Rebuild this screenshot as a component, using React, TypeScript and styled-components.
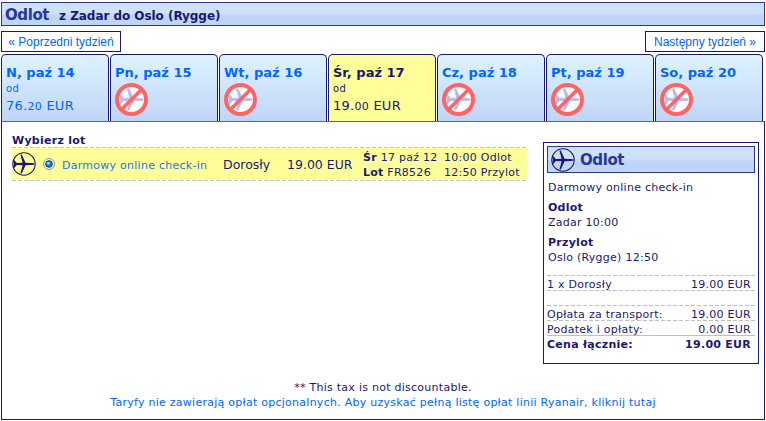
import styled, { createGlobalStyle } from 'styled-components';

const colors = {
    navy: '#191970',
    title: '#2b3796',
    link: '#0066ff',
    selected: '#ffff99',
    dash: '#c0c0c0',
}

const GlobalStyle = createGlobalStyle`
    *{
        box-sizing: border-box;
    }
    body{
        margin: 0;
        background: white;
        color: ${colors.navy};
        font-family: Verdana, "DejaVu Sans", sans-serif;
        font-size: 11px;
        line-height: 15px;
        letter-spacing: 0.26px;
        white-space: nowrap;
    }
    p, h1, h2, h3{
        margin: 0;
        font-size: inherit;
    }
`
const Page = styled.main`
    width: 766px;
    height: 421px;
    padding: 2px 1px 1px;
    overflow: hidden;
`
const TitleBar = styled.header`
    height: 24px;
    padding-left: 3px;
    display: flex;
    align-items: baseline;
    gap: 10px;
    line-height: 24px;
    border: 1px solid ${colors.title};
    background: linear-gradient(#cfe0f9 0 45%, #bfd5f6 60%);
`
const Title = styled.h1`
    color: ${colors.title};
    font-size: 15px;
    letter-spacing: -0.4px;
`
const Route = styled.h2`
    font-size: 12px;
    letter-spacing: -0.05px;
`
const WeekNav = styled.nav`
    margin-top: 5px;
    display: flex;
    justify-content: space-between;
`
const WeekLink = styled.a`
    width: 120px;
    height: 21px;
    border: 1px solid ${colors.navy};
    color: ${colors.link};
    font: 12px/20px "Liberation Sans", Arial, sans-serif;
    letter-spacing: 0;
    text-align: center;
`
const Tabs = styled.div`
    margin-top: 2px;
    display: flex;
    gap: 1px;
`
const Tab = styled.div<{ $selected?: boolean }>`
    width: 108px;
    height: 67px;
    padding: 10px 0 0 4px;
    border: 1px solid ${colors.navy};
    border-bottom: 0;
    border-radius: 5px 5px 0 0;
    color: ${({ $selected }) => $selected ? colors.navy : colors.link};
    background: ${({ $selected }) => $selected ? colors.selected : 'linear-gradient(#def3ff, #bfd5f6)'};
    svg{
        display: block;
        margin-top: 2px;
    }
`
const Day = styled.h3`
    font-size: 13px;
    line-height: 16px;
    letter-spacing: 0;
`
const From = styled.p`
    font-size: 10px;
    line-height: 15px;
`
const Price = styled.p`
    font-size: 13px;
    line-height: 20px;
    small{
        font-size: 11px;
    }
`
const Panel = styled.section`
    height: 299px;
    border: 1px solid ${colors.navy};
    border-top-color: #646478;
    display: flex;
    flex-direction: column;
    justify-content: space-between;
`
const PanelBody = styled.div`
    padding: 10px 5px 0 10px;
    display: flex;
    justify-content: space-between;
    align-items: flex-start;
`
const FlightList = styled.div`
    width: 515px;
`
const ListTitle = styled.h3`
    height: 15px;
    line-height: 17px;
`
const Dashes = styled.hr`
    height: 1px;
    margin: 0;
    border: 0;
    background: repeating-linear-gradient(90deg, ${colors.dash} 0 4px, transparent 4px 6px);
`
const FlightRow = styled.div`
    height: 32px;
    display: grid;
    grid-template-columns: 31px 19px 161px 64px 76px 81px auto;
    align-items: center;
    background: ${colors.selected};
    svg{
        display: block;
    }
`
const Fare = styled.a`
    color: #2472e8;
    padding-top: 2px;
`
const Large = styled.p`
    font-size: 12.5px;
    padding-top: 1px;
    letter-spacing: 0;
`
const Times = styled.div`
    padding-top: 2px;
`
const Sidebar = styled.aside`
    width: 216px;
    height: 222px;
    margin-top: 10px;
    padding: 3px;
    border: 1px solid ${colors.navy};
`
const SidebarTitle = styled(TitleBar)`
    height: 27px;
    align-items: center;
    gap: 5px;
`
const Details = styled.div`
    padding: 7px 0 10px 1px;
    p + h3{
        margin-top: 5px;
    }
`
const SummaryRow = styled.div<{ $total?: boolean }>`
    height: 14px;
    padding-right: 4px;
    display: flex;
    justify-content: space-between;
    line-height: 17px;
    font-weight: ${({ $total }) => $total ? 'bold' : 'normal'};
`
const TotalRule = styled(Dashes)`
    background: ${colors.dash};
`
const Footer = styled.footer`
    padding-bottom: 9px;
    text-align: center;
    a{
        color: ${colors.link};
    }
`

const planePath = 'M1 8 2.2 8 4.8 11 10.6 10.8 8.4 2.5 9.8 2.5 13.6 10.8 19.5 11Q22.3 11.2 23 12 22.3 12.8 19.5 13L13.6 13.2 9.8 21.5 8.4 21.5 10.6 13.2 4.8 13 2.2 16 1 16 2 12Z'

const PlaneIcon = () => (
    <svg width="24" height="24" viewBox="0 0 24 24">
        <circle cx="12" cy="12" r="11.2" fill="none" stroke={colors.navy} strokeWidth="1.1" />
        <path d={planePath} fill={colors.navy} />
    </svg>
)

const NoFlightIcon = () => (
    <svg width="33" height="33" viewBox="0 0 33 33">
        <circle cx="16.5" cy="16.5" r="14.5" fill="white" />
        <path d={planePath} fill="#b8b8ef" stroke="#b8b8ef" strokeWidth="0.8" transform="translate(3.3 3.3) scale(1.1)" />
        <circle cx="16.5" cy="16.5" r="14.5" fill="none" stroke="#ff6464" strokeWidth="4" />
        <path d="M6.5 26.5 26.5 6.5" stroke="#ff6464" strokeWidth="3.6" />
    </svg>
)

const RadioIcon = () => (
    <svg width="12" height="12" viewBox="0 0 12 12">
        <circle cx="6" cy="6" r="5.5" fill="#f4f4f4" stroke="#8e8f8f" />
        <circle cx="6" cy="6" r="3.3" fill="#1c7fb0" stroke="#173e5c" />
        <circle cx="5.3" cy="5.2" r="1.5" fill="#8fdcf5" />
    </svg>
)

const days = [
    { day: 'N, paź 14', euros: '76.', cents: '20' },
    { day: 'Pn, paź 15' },
    { day: 'Wt, paź 16' },
    { day: 'Śr, paź 17', euros: '19.', cents: '00', selected: true },
    { day: 'Cz, paź 18' },
    { day: 'Pt, paź 19' },
    { day: 'So, paź 20' },
]

const App = () => {
    return (
        <Page>
            <GlobalStyle />
            <TitleBar>
                <Title>Odlot</Title>
                <Route>z Zadar do Oslo (Rygge)</Route>
            </TitleBar>
            <WeekNav>
                <WeekLink>« Poprzedni tydzień</WeekLink>
                <WeekLink>Następny tydzień »</WeekLink>
            </WeekNav>
            <Tabs>
                {days.map(({ day, euros, cents, selected }) => (
                    <Tab key={day} $selected={selected}>
                        <Day>{day}</Day>
                        {euros ? (
                            <>
                                <From>od</From>
                                <Price>{euros}<small>{cents}</small> EUR</Price>
                            </>
                        ) : <NoFlightIcon />}
                    </Tab>
                ))}
            </Tabs>
            <Panel>
                <PanelBody>
                    <FlightList>
                        <ListTitle>Wybierz lot</ListTitle>
                        <Dashes />
                        <FlightRow>
                            <PlaneIcon />
                            <RadioIcon />
                            <Fare>Darmowy online check-in</Fare>
                            <Large>Dorosły</Large>
                            <Large>19.00 EUR</Large>
                            <Times>
                                <p><b>Śr</b> 17 paź 12</p>
                                <p><b>Lot</b> FR8526</p>
                            </Times>
                            <Times>
                                <p>10:00 Odlot</p>
                                <p>12:50 Przylot</p>
                            </Times>
                        </FlightRow>
                        <Dashes />
                    </FlightList>
                    <Sidebar>
                        <SidebarTitle>
                            <PlaneIcon />
                            <Title>Odlot</Title>
                        </SidebarTitle>
                        <Details>
                            <p>Darmowy online check-in</p>
                            <h3>Odlot</h3>
                            <p>Zadar 10:00</p>
                            <h3>Przylot</h3>
                            <p>Oslo (Rygge) 12:50</p>
                        </Details>
                        <Dashes />
                        <SummaryRow><span>1 x Dorosły</span><span>19.00 EUR</span></SummaryRow>
                        <Dashes />
                        <SummaryRow />
                        <Dashes />
                        <SummaryRow><span>Opłata za transport:</span><span>19.00 EUR</span></SummaryRow>
                        <Dashes />
                        <SummaryRow><span>Podatek i opłaty:</span><span>0.00 EUR</span></SummaryRow>
                        <TotalRule />
                        <SummaryRow $total><span>Cena łącznie:</span><span>19.00 EUR</span></SummaryRow>
                    </Sidebar>
                </PanelBody>
                <Footer>
                    <p>** This tax is not discountable.</p>
                    <a>Taryfy nie zawierają opłat opcjonalnych. Aby uzyskać pełną listę opłat linii Ryanair, kliknij tutaj</a>
                </Footer>
            </Panel>
        </Page>
    )
}

export default App
